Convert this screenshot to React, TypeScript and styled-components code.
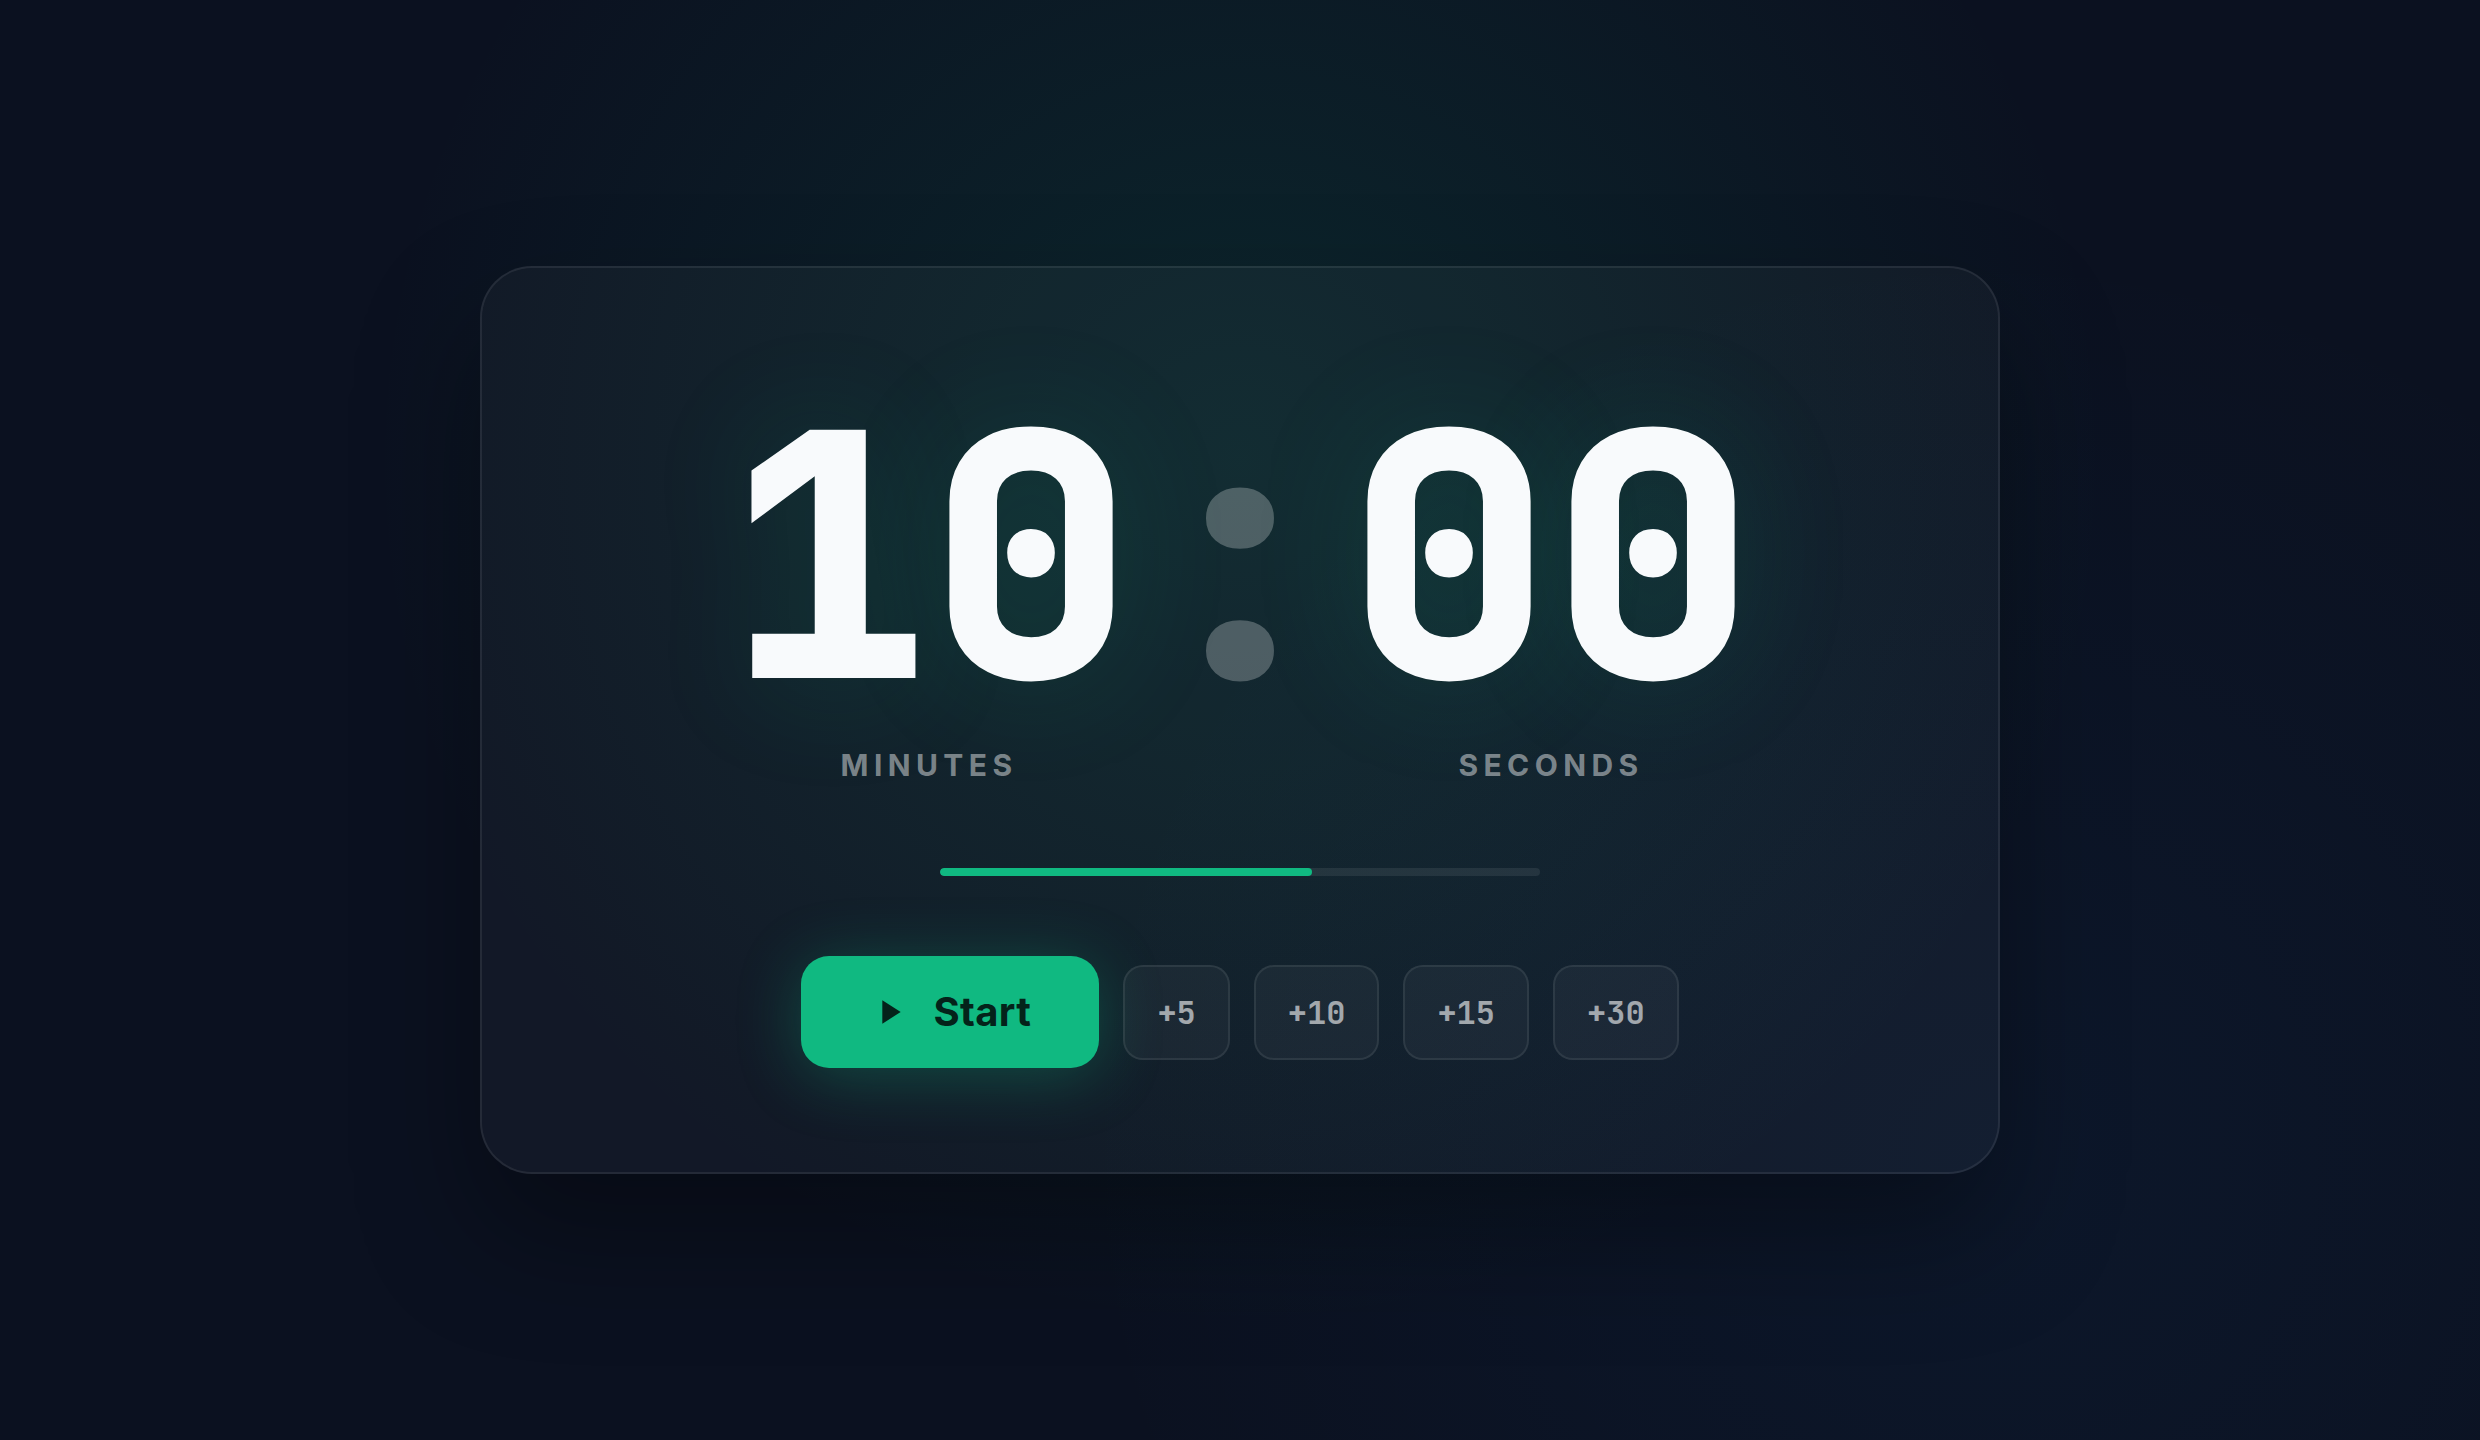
import React from "react";
import styled, { createGlobalStyle } from "styled-components";

const MONO = '"JetBrains Mono", "DejaVu Sans Mono", monospace';
const SANS = 'Inter, "Liberation Sans", sans-serif';

const GlobalStyle = createGlobalStyle`
  *, *::before, *::after { box-sizing: border-box; }
  body { margin: 0; background: #0b1120; font-family: ${SANS}; }
  button { font: inherit; cursor: pointer; }
`;

const Page = styled.main`
  min-height: 100vh;
  display: flex;
  align-items: center;
  justify-content: center;
  padding: 48px;
  background:
    radial-gradient(circle at 50% 32%, rgba(16, 185, 129, 0.13), transparent 55%),
    radial-gradient(circle at 80% 80%, rgba(37, 140, 243, 0.05), transparent 40%),
    #0b1120;
`;

const Card = styled.section`
  width: 100%;
  max-width: 1520px;
  display: flex;
  flex-direction: column;
  align-items: center;
  padding: 118px 96px 104px;
  border: 2px solid rgba(255, 255, 255, 0.08);
  border-radius: 52px;
  background: rgba(255, 255, 255, 0.03);
  box-shadow: 0 60px 120px rgba(0, 0, 0, 0.35);
`;

const Clock = styled.div`
  display: flex;
  align-items: flex-start;
  justify-content: center;
  gap: 5px;
`;

const Unit = styled.div`
  display: flex;
  flex-direction: column;
  align-items: center;
  gap: 20px;
`;

const Digits = styled.span`
  font: 800 340px/340px ${MONO};
  color: #f8fafc;
  text-shadow: 0 0 120px rgba(16, 185, 129, 0.16);
`;

const Colon = styled.span`
  font: 800 340px/340px ${MONO};
  color: rgba(255, 255, 255, 0.25);
`;

const UnitLabel = styled.span`
  font-size: 30px;
  line-height: 38px;
  font-weight: 700;
  letter-spacing: 0.18em;
  text-transform: uppercase;
  color: rgba(255, 255, 255, 0.45);
`;

const Track = styled.div`
  width: 600px;
  max-width: 100%;
  height: 8px;
  margin-top: 84px;
  border-radius: 4px;
  background: rgba(255, 255, 255, 0.08);
  overflow: hidden;
`;

const Fill = styled.div`
  height: 100%;
  border-radius: 4px;
  background: #10b981;
`;

const Actions = styled.div`
  display: flex;
  flex-wrap: wrap;
  align-items: center;
  justify-content: center;
  gap: 24px;
  margin-top: 80px;
`;

const StartButton = styled.button`
  display: flex;
  align-items: center;
  gap: 24px;
  padding: 32px 68px;
  border: 0;
  border-radius: 28px;
  background: #10b981;
  color: #04231a;
  font-size: 40px;
  line-height: 48px;
  font-weight: 700;
  letter-spacing: 0.01em;
  box-shadow: 0 8px 64px rgba(16, 185, 129, 0.3);
`;

const AddButton = styled.button`
  padding: 24px 32px;
  border: 2px solid rgba(255, 255, 255, 0.08);
  border-radius: 20px;
  background: rgba(255, 255, 255, 0.04);
  color: rgba(255, 255, 255, 0.6);

  && {
    font: 700 32px ${MONO};
  }
`;

const PlayIcon = () => (
  <svg width="40" height="40" viewBox="0 0 24 24" fill="currentColor" aria-hidden="true">
    <path d="M8 5v14l11-7z" />
  </svg>
);

const STEPS = [5, 10, 15, 30];
const UNITS = [
  { label: "Minutes", value: "10" },
  { label: "Seconds", value: "00" },
];

export default function App() {
  const progress = 62;
  return (
    <>
      <GlobalStyle />
      <Page>
        <Card>
          <Clock role="timer">
            <Unit>
              <Digits>{UNITS[0].value}</Digits>
              <UnitLabel>{UNITS[0].label}</UnitLabel>
            </Unit>
            <Colon>:</Colon>
            <Unit>
              <Digits>{UNITS[1].value}</Digits>
              <UnitLabel>{UNITS[1].label}</UnitLabel>
            </Unit>
          </Clock>
          <Track
            role="progressbar"
            aria-label="Time remaining"
            aria-valuenow={progress}
            aria-valuemin={0}
            aria-valuemax={100}
          >
            <Fill style={{ width: `${progress}%` }} />
          </Track>
          <Actions>
            <StartButton type="button">
              <PlayIcon />
              Start
            </StartButton>
            {STEPS.map((step) => (
              <AddButton key={step} type="button">+{step}</AddButton>
            ))}
          </Actions>
        </Card>
      </Page>
    </>
  );
}
